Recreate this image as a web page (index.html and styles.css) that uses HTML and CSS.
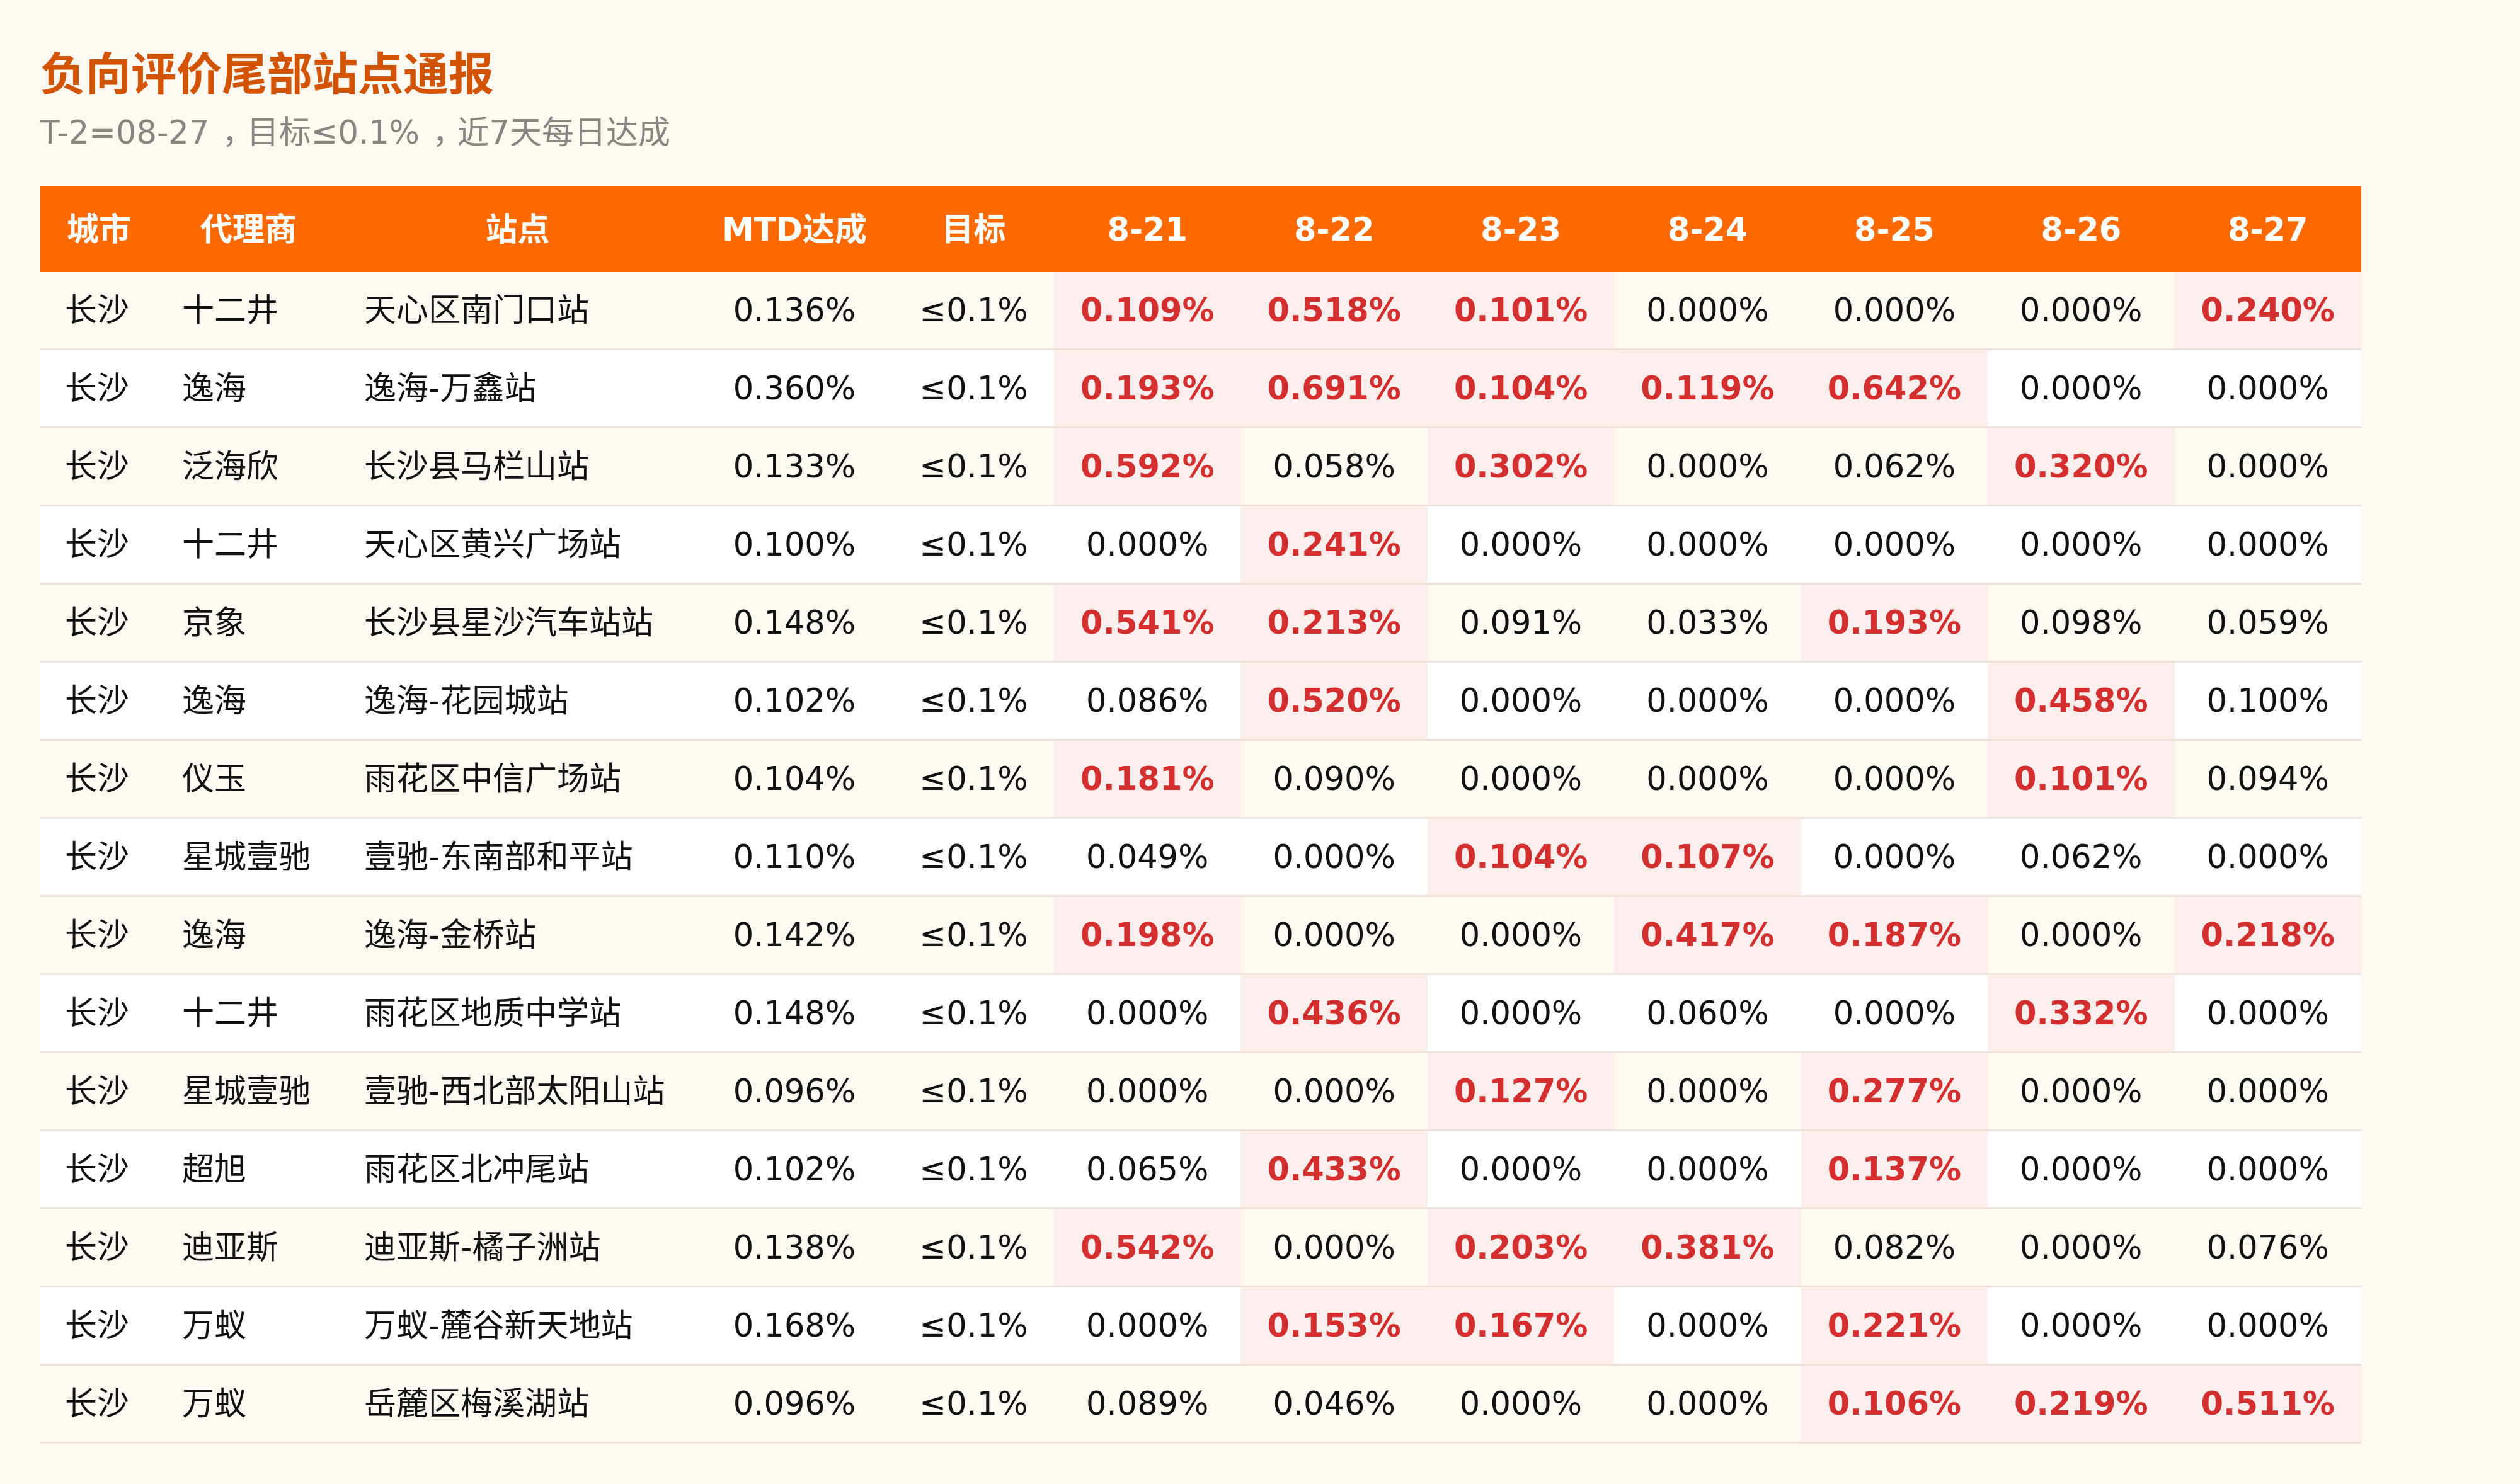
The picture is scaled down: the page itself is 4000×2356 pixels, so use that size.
FILE: index.html
```html
<!DOCTYPE html>
<html lang="zh-CN">
<head>
<meta charset="utf-8">
<title>负向评价尾部站点通报</title>
<link rel="stylesheet" href="styles.css">
</head>
<body>
<div class="page">
  <h1 class="title">负向评价尾部站点通报</h1>
  <p class="subtitle">T-2=08-27<span class="punct">，</span>目标≤0.1%<span class="punct">，</span>近7天每日达成</p>
  <table class="report">
    <colgroup>
      <col class="c-city"><col class="c-agent"><col class="c-site"><col class="c-mtd"><col class="c-goal">
      <col class="c-day"><col class="c-day"><col class="c-day"><col class="c-day"><col class="c-day"><col class="c-day"><col class="c-day">
    </colgroup>
    <thead>
      <tr>
        <th>城市</th><th>代理商</th><th>站点</th><th>MTD达成</th><th>目标</th>
        <th>8-21</th><th>8-22</th><th>8-23</th><th>8-24</th><th>8-25</th><th>8-26</th><th>8-27</th>
      </tr>
    </thead>
    <tbody>
      <tr><td class="t">长沙</td><td class="t">十二井</td><td class="t">天心区南门口站</td><td>0.136%</td><td>≤0.1%</td><td class="bad">0.109%</td><td class="bad">0.518%</td><td class="bad">0.101%</td><td>0.000%</td><td>0.000%</td><td>0.000%</td><td class="bad">0.240%</td></tr>
      <tr><td class="t">长沙</td><td class="t">逸海</td><td class="t">逸海-万鑫站</td><td>0.360%</td><td>≤0.1%</td><td class="bad">0.193%</td><td class="bad">0.691%</td><td class="bad">0.104%</td><td class="bad">0.119%</td><td class="bad">0.642%</td><td>0.000%</td><td>0.000%</td></tr>
      <tr><td class="t">长沙</td><td class="t">泛海欣</td><td class="t">长沙县马栏山站</td><td>0.133%</td><td>≤0.1%</td><td class="bad">0.592%</td><td>0.058%</td><td class="bad">0.302%</td><td>0.000%</td><td>0.062%</td><td class="bad">0.320%</td><td>0.000%</td></tr>
      <tr><td class="t">长沙</td><td class="t">十二井</td><td class="t">天心区黄兴广场站</td><td>0.100%</td><td>≤0.1%</td><td>0.000%</td><td class="bad">0.241%</td><td>0.000%</td><td>0.000%</td><td>0.000%</td><td>0.000%</td><td>0.000%</td></tr>
      <tr><td class="t">长沙</td><td class="t">京象</td><td class="t">长沙县星沙汽车站站</td><td>0.148%</td><td>≤0.1%</td><td class="bad">0.541%</td><td class="bad">0.213%</td><td>0.091%</td><td>0.033%</td><td class="bad">0.193%</td><td>0.098%</td><td>0.059%</td></tr>
      <tr><td class="t">长沙</td><td class="t">逸海</td><td class="t">逸海-花园城站</td><td>0.102%</td><td>≤0.1%</td><td>0.086%</td><td class="bad">0.520%</td><td>0.000%</td><td>0.000%</td><td>0.000%</td><td class="bad">0.458%</td><td>0.100%</td></tr>
      <tr><td class="t">长沙</td><td class="t">仪玉</td><td class="t">雨花区中信广场站</td><td>0.104%</td><td>≤0.1%</td><td class="bad">0.181%</td><td>0.090%</td><td>0.000%</td><td>0.000%</td><td>0.000%</td><td class="bad">0.101%</td><td>0.094%</td></tr>
      <tr><td class="t">长沙</td><td class="t">星城壹驰</td><td class="t">壹驰-东南部和平站</td><td>0.110%</td><td>≤0.1%</td><td>0.049%</td><td>0.000%</td><td class="bad">0.104%</td><td class="bad">0.107%</td><td>0.000%</td><td>0.062%</td><td>0.000%</td></tr>
      <tr><td class="t">长沙</td><td class="t">逸海</td><td class="t">逸海-金桥站</td><td>0.142%</td><td>≤0.1%</td><td class="bad">0.198%</td><td>0.000%</td><td>0.000%</td><td class="bad">0.417%</td><td class="bad">0.187%</td><td>0.000%</td><td class="bad">0.218%</td></tr>
      <tr><td class="t">长沙</td><td class="t">十二井</td><td class="t">雨花区地质中学站</td><td>0.148%</td><td>≤0.1%</td><td>0.000%</td><td class="bad">0.436%</td><td>0.000%</td><td>0.060%</td><td>0.000%</td><td class="bad">0.332%</td><td>0.000%</td></tr>
      <tr><td class="t">长沙</td><td class="t">星城壹驰</td><td class="t">壹驰-西北部太阳山站</td><td>0.096%</td><td>≤0.1%</td><td>0.000%</td><td>0.000%</td><td class="bad">0.127%</td><td>0.000%</td><td class="bad">0.277%</td><td>0.000%</td><td>0.000%</td></tr>
      <tr><td class="t">长沙</td><td class="t">超旭</td><td class="t">雨花区北冲尾站</td><td>0.102%</td><td>≤0.1%</td><td>0.065%</td><td class="bad">0.433%</td><td>0.000%</td><td>0.000%</td><td class="bad">0.137%</td><td>0.000%</td><td>0.000%</td></tr>
      <tr><td class="t">长沙</td><td class="t">迪亚斯</td><td class="t">迪亚斯-橘子洲站</td><td>0.138%</td><td>≤0.1%</td><td class="bad">0.542%</td><td>0.000%</td><td class="bad">0.203%</td><td class="bad">0.381%</td><td>0.082%</td><td>0.000%</td><td>0.076%</td></tr>
      <tr><td class="t">长沙</td><td class="t">万蚁</td><td class="t">万蚁-麓谷新天地站</td><td>0.168%</td><td>≤0.1%</td><td>0.000%</td><td class="bad">0.153%</td><td class="bad">0.167%</td><td>0.000%</td><td class="bad">0.221%</td><td>0.000%</td><td>0.000%</td></tr>
      <tr><td class="t">长沙</td><td class="t">万蚁</td><td class="t">岳麓区梅溪湖站</td><td>0.096%</td><td>≤0.1%</td><td>0.089%</td><td>0.046%</td><td>0.000%</td><td>0.000%</td><td class="bad">0.106%</td><td class="bad">0.219%</td><td class="bad">0.511%</td></tr>
    </tbody>
  </table>
</div>
</body>
</html>
```

FILE: styles.css
```css
html, body {
  margin: 0;
  padding: 0;
  background: #fdf8f2;
}
body {
  font-family: "DejaVu Sans", "Noto Sans CJK SC", sans-serif;
  color: #111;
}
.page {
  padding: 64px 64px 0 64px;
  min-height: 2292px;
}
.title {
  margin: 0;
  font-size: 72px;
  line-height: 96px;
  font-weight: 700;
  color: #d35400;
  font-family: "Noto Sans CJK SC", sans-serif;
}
.subtitle {
  margin: 16px 0 0 0;
  font-size: 51px;
  line-height: 70px;
  color: #8a8580;
}
.punct {
  font-feature-settings: "halt" 1;
  padding-left: 20px;
  padding-right: 14px;
}
.report {
  margin-top: 50px;
  width: 3684px;
  table-layout: fixed;
  border-collapse: collapse;
  font-size: 51px;
}
.c-city { width: 186px; }
.c-agent { width: 289px; }
.c-site { width: 565px; }
.c-mtd { width: 314px; }
.c-goal { width: 255px; }
.c-day { width: 296.4px; }
.report th {
  background: #ff6a00;
  color: #fff;
  font-weight: 700;
  line-height: 61px;
  padding: 38px 0 37px 0;
  text-align: center;
  white-space: nowrap;
}
.report td {
  line-height: 61px;
  padding: 30px 0;
  text-align: center;
  white-space: nowrap;
  border-bottom: 3px solid #ede3da;
}
.report td.t {
  text-align: left;
  padding-left: 39px;
}
.report tbody tr:nth-child(odd) { background: #fdf8f2; }
.report tbody tr:nth-child(even) { background: #ffffff; }
.report td.bad {
  background: #fdeeee;
  color: #d32f2f;
  font-weight: 700;
}
```
